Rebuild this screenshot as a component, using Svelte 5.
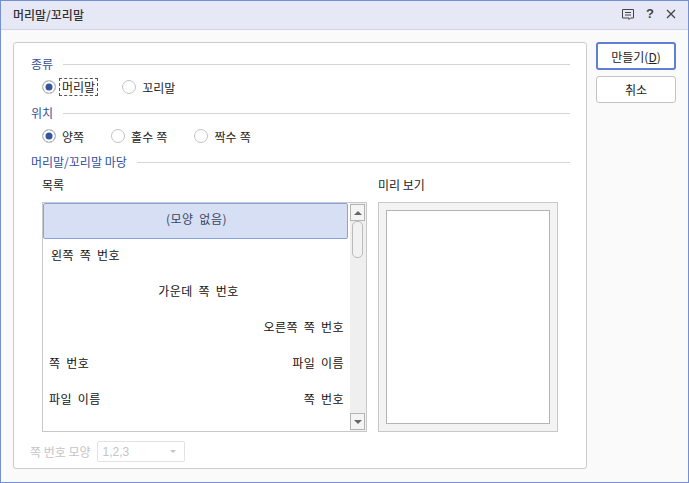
<script>
	const rows = [
		{ left: '', center: '(모양 없음)', right: '', selected: true },
		{ left: '왼쪽 쪽 번호', center: '', right: '', shifted: true },
		{ left: '', center: '가운데 쪽 번호', right: '', shifted: true },
		{ left: '', center: '', right: '오른쪽 쪽 번호' },
		{ left: '쪽 번호', center: '', right: '파일 이름' },
		{ left: '파일 이름', center: '', right: '쪽 번호' }
	];
</script>

<div class="dialog">
	<header class="titlebar">
		<span class="title">머리말/꼬리말</span>
		<div class="tools">
			<svg width="14" height="14" viewBox="0 0 14 14" fill="none" stroke="#444" stroke-width="1">
				<path d="M1.5 2.5h11v8.5h-3l-1.5 1.5v-1.5h-6.500z" />
				<path d="M4 5.500h6M4 8h6" />
			</svg>
			<span class="help">?</span>
			<svg width="12" height="12" viewBox="0 0 12 12" fill="none" stroke="#444" stroke-width="1.3">
				<path d="M2 2l8 8M10 2l-8 8" />
			</svg>
		</div>
	</header>

	<div class="body">
		<section class="panel">
			<div class="legend"><span>종류</span><i></i></div>
			<div class="radios first">
				<label class="radio on"><b></b><span class="focus">머리말</span></label>
				<label class="radio"><b></b><span>꼬리말</span></label>
			</div>

			<div class="legend"><span>위치</span><i></i></div>
			<div class="radios second">
				<label class="radio on"><b></b><span>양쪽</span></label>
				<label class="radio"><b></b><span>홀수 쪽</span></label>
				<label class="radio"><b></b><span>짝수 쪽</span></label>
			</div>

			<div class="legend"><span>머리말/꼬리말 마당</span><i></i></div>

			<div class="columns">
				<div>
					<div class="col-label">목록</div>
					<div class="list">
						<div class="rows">
							{#each rows as row}
								<div class="row" class:selected={row.selected} class:shifted={row.shifted}>
									<span>{row.left}</span>
									<span class="mid">{row.center}</span>
									<span>{row.right}</span>
								</div>
							{/each}
						</div>
						<div class="scrollbar">
							<div class="arrow"><em class="up"></em></div>
							<div class="thumb"></div>
							<div class="track"></div>
							<div class="arrow"><em class="down"></em></div>
						</div>
					</div>
				</div>
				<div>
					<div class="col-label">미리 보기</div>
					<div class="preview"><div class="page"></div></div>
				</div>
			</div>

			<div class="format">
				<span>쪽 번호 모양</span>
				<div class="select"><span>1,2,3</span><em></em></div>
			</div>
		</section>

		<aside class="actions">
			<button class="primary">만들기(<u>D</u>)</button>
			<button>취소</button>
		</aside>
	</div>
</div>

<style>
	:global(body) {
		margin: 0;
	}

	.dialog {
		box-sizing: border-box;
		width: 689px;
		height: 483px;
		border: 1px solid #7390d2;
		background: #fafafa;
		font-family: "Noto Sans CJK KR", "Noto Sans", sans-serif;
		font-size: 12px;
		color: #222;
		overflow: hidden;
	}

	.titlebar {
		box-sizing: border-box;
		display: flex;
		align-items: center;
		justify-content: space-between;
		height: 29px;
		padding: 0 11px 2px 12px;
		background: #e6e9f5;
		border-bottom: 1px solid #cfd3e8;
	}

	.title {
		color: #333;
		font-weight: 500;
	}

	.tools {
		display: flex;
		align-items: center;
		gap: 11px;
	}

	.help {
		width: 8px;
		font-family: "Liberation Sans", sans-serif;
		font-size: 13px;
		font-weight: 700;
		color: #444;
		line-height: 14px;
	}

	.body {
		display: flex;
		align-items: flex-start;
		gap: 9px;
		padding: 12px 0 0 12px;
	}

	.panel {
		box-sizing: border-box;
		width: 574px;
		height: 427px;
		padding: 13px 16px 0 17px;
		background: #fff;
		border: 1px solid #ccc;
		border-radius: 3px;
	}

	.legend {
		display: flex;
		align-items: center;
		gap: 10px;
		height: 16px;
		color: #2f4f9b;
	}

	.legend span {
		margin-bottom: 2px;
	}

	.legend i {
		flex: 1;
		height: 1px;
		background: #d4d4d4;
	}

	.radios {
		box-sizing: border-box;
		display: flex;
		align-items: center;
		height: 33px;
		padding: 0 0 3px 11px;
		word-spacing: 0.5px;
	}

	.first { gap: 24px; }
	.second { gap: 27px; }

	.radio {
		display: flex;
		align-items: center;
		gap: 6px;
	}

	.radio b {
		box-sizing: border-box;
		width: 14px;
		height: 14px;
		border: 1px solid #c4c4c4;
		border-radius: 50%;
		background: #fff;
	}

	.radio.on b {
		background: #35549e;
		box-shadow: inset 0 0 0 2.5px #fff;
	}

	.radio:has(.focus) {
		gap: 3px;
	}

	.focus {
		padding: 0 2px;
		border: 1px dashed #555;
		line-height: 16px;
	}

	.columns {
		display: flex;
		gap: 11px;
		margin: 6px 0 0 11px;
	}

	.col-label {
		height: 26px;
		line-height: 18px;
	}

	.list {
		box-sizing: border-box;
		display: flex;
		width: 325px;
		height: 230px;
		border: 1px solid #c8c8c8;
		background: #fff;
		color: #111;
	}

	.rows {
		flex: 1;
		min-width: 0;
		margin-right: 2px;
		letter-spacing: 0.5px;
		word-spacing: 2.5px;
	}

	.row {
		box-sizing: border-box;
		display: grid;
		grid-template-columns: 1fr auto 1fr;
		align-items: center;
		height: 36px;
		padding: 0 4px 6px 6px;
		white-space: nowrap;
	}

	.row.shifted {
		padding-left: 8px;
	}

	.shifted .mid {
		padding-left: 2px;
	}

	.row span:last-child {
		text-align: right;
	}

	.row .mid {
		text-align: center;
	}

	.selected {
		background: #d6dff4;
		border: 1px solid #8aa3de;
		border-radius: 2px;
		color: #3a4560;
	}

	.scrollbar {
		display: flex;
		flex-direction: column;
		align-items: center;
		width: 16px;
		background: #efefef;
		padding: 1px 1px 1px 0;
		box-sizing: border-box;
	}

	.arrow {
		box-sizing: border-box;
		display: flex;
		align-items: center;
		justify-content: center;
		width: 15px;
		height: 17px;
		background: #f4f4f4;
		border: 1px solid #b4b4b4;
	}

	.arrow em {
		width: 0;
		height: 0;
		border-left: 4px solid transparent;
		border-right: 4px solid transparent;
	}

	.up { border-bottom: 4px solid #666; }
	.down { border-top: 4px solid #666; }

	.thumb {
		box-sizing: border-box;
		width: 11px;
		height: 37px;
		border: 1px solid #bbb;
		border-radius: 5px;
		background: #f2f2f2;
	}

	.track {
		flex: 1;
	}

	.preview {
		box-sizing: border-box;
		width: 180px;
		height: 230px;
		padding: 7px;
		background: #f3f3f3;
		border: 1px solid #c8c8c8;
	}

	.page {
		box-sizing: border-box;
		height: 100%;
		background: #fff;
		border: 1px solid #b4b4b4;
	}

	.format {
		display: flex;
		align-items: center;
		gap: 6px;
		margin: 9px 0 0 -1px;
		color: #c4c4c4;
	}

	.select {
		box-sizing: border-box;
		display: flex;
		align-items: center;
		justify-content: space-between;
		width: 88px;
		height: 21px;
		padding: 0 8px 0 5px;
		border: 1px solid #e2e2e2;
		border-radius: 2px;
		font-family: "Liberation Sans", sans-serif;
	}

	.select em {
		width: 0;
		height: 0;
		border-left: 3px solid transparent;
		border-right: 3px solid transparent;
		border-top: 3px solid #c4c4c4;
	}

	.actions {
		display: flex;
		flex-direction: column;
		gap: 6px;
	}

	button {
		box-sizing: border-box;
		width: 80px;
		height: 27px;
		padding: 0;
		background: #fff;
		border: 1px solid #c4c4c4;
		border-radius: 3px;
		font: inherit;
		color: #222;
	}

	.primary {
		height: 28px;
		border: 2px solid #5f7fd6;
	}
</style>
